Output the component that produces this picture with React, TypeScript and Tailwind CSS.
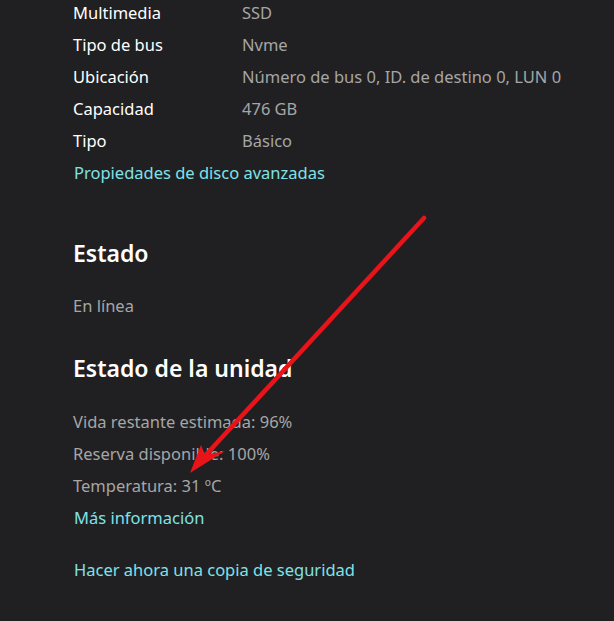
const props = [
  { label: 'Multimedia', value: 'SSD' },
  { label: 'Tipo de bus', value: 'Nvme' },
  { label: 'Ubicación', value: 'Número de bus 0, ID. de destino 0, LUN 0' },
  { label: 'Capacidad', value: '476 GB' },
  { label: 'Tipo', value: 'Básico' },
];

const health = [
  'Vida restante estimada: 96%',
  'Reserva disponible: 100%',
  'Temperatura: 31 ºC',
];

export default function App() {
  return (
    <div
      className="relative w-[614px] h-[621px] overflow-hidden bg-[#202022] text-white"
      style={{ fontFamily: '"Noto Sans", "Open Sans", sans-serif' }}
    >
      <div className="-mt-[3px] pl-[73px]">
        <div className="flex flex-col">
          {props.map((p) => (
            <div key={p.label} className="flex h-8 items-center text-[16.5px]">
              <span className="w-[169px] text-white">{p.label}</span>
              <span className="text-[#a6a6a6]">{p.value}</span>
            </div>
          ))}
        </div>
        <a className="ml-px flex h-8 items-center text-[16.5px] text-[#80e2e8]">Propiedades de disco avanzadas</a>

        <h2 className="mt-[48px] text-[23px] font-semibold leading-8">Estado</h2>
        <p className="mt-[21px] h-8 leading-8 text-[16.5px] text-[#a6a6a6]">En línea</p>

        <h2 className="mt-[30px] text-[23px] font-semibold leading-8">Estado de la unidad</h2>
        <div className="mt-[22px] flex flex-col">
          {health.map((h) => (
            <div key={h} className="flex h-8 items-center text-[16.5px] text-[#a6a6a6]">{h}</div>
          ))}
        </div>
        <a className="ml-px flex h-8 items-center text-[16.5px] text-[#80e2e8]">Más información</a>
        <a className="ml-px mt-[20px] flex h-8 items-center text-[16.5px] text-[#80e2e8]">Hacer ahora una copia de seguridad</a>
      </div>

      <svg className="absolute left-0 top-0" width="614" height="621" viewBox="0 0 614 621">
        <line x1="424" y1="218" x2="203" y2="458" stroke="#e8141a" strokeWidth="4.5" strokeLinecap="round" />
        <path d="M190 473 L201 445 L205 455 L225 451 Z" fill="#e8141a" />
      </svg>
    </div>
  );
}
